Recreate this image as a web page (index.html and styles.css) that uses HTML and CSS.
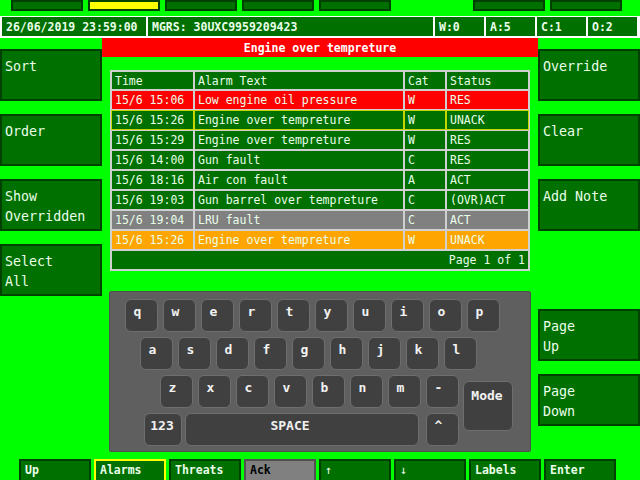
FILE: index.html
```html
<!DOCTYPE html>
<html>
<head>
<meta charset="utf-8">
<link rel="stylesheet" href="styles.css">
</head>
<body>
<div class="topnav">
  <span class="tb"></span>
  <span class="tb tb-active"></span>
  <span class="tb"></span>
  <span class="tb"></span>
  <span class="tb"></span>
  <span class="tb tb-hidden"></span>
  <span class="tb"></span>
  <span class="tb"></span>
</div>
<div class="status">
  <div class="cell cell-date">26/06/2019 23:59:00</div>
  <div class="cell cell-mgrs">MGRS: 30UXC9959209423</div>
  <div class="cell cell-count">W:0</div>
  <div class="cell cell-count">A:5</div>
  <div class="cell cell-count">C:1</div>
  <div class="cell cell-count">O:2</div>
</div>
<div class="main">
  <div class="side">
    <div class="sbtn">Sort</div>
    <div class="sbtn">Order</div>
    <div class="sbtn">Show<br>Overridden</div>
    <div class="sbtn">Select<br>All</div>
  </div>
  <div class="center">
    <div class="title">Engine over tempreture</div>
    <table class="alarms">
      <thead>
        <tr class="head">
          <th class="c-time">Time</th>
          <th class="c-text">Alarm Text</th>
          <th class="c-cat">Cat</th>
          <th class="c-status">Status</th>
        </tr>
      </thead>
      <tbody>
        <tr class="r-red"><td>15/6 15:06</td><td>Low engine oil pressure</td><td>W</td><td>RES</td></tr>
        <tr class="r-sel"><td>15/6 15:26</td><td>Engine over tempreture</td><td>W</td><td>UNACK</td></tr>
        <tr><td>15/6 15:29</td><td>Engine over tempreture</td><td>W</td><td>RES</td></tr>
        <tr><td>15/6 14:00</td><td>Gun fault</td><td>C</td><td>RES</td></tr>
        <tr><td>15/6 18:16</td><td>Air con fault</td><td>A</td><td>ACT</td></tr>
        <tr><td>15/6 19:03</td><td>Gun barrel over tempreture</td><td>C</td><td>(OVR)ACT</td></tr>
        <tr class="r-gray"><td>15/6 19:04</td><td>LRU fault</td><td>C</td><td>ACT</td></tr>
        <tr class="r-orange"><td>15/6 15:26</td><td>Engine over tempreture</td><td>W</td><td>UNACK</td></tr>
        <tr class="r-foot"><td colspan="4">Page 1 of 1</td></tr>
      </tbody>
    </table>
    <div class="keyboard">
      <div class="krow">
        <div class="key">q</div><div class="key">w</div><div class="key">e</div><div class="key">r</div><div class="key">t</div><div class="key">y</div><div class="key">u</div><div class="key">i</div><div class="key">o</div><div class="key">p</div>
      </div>
      <div class="krow krow-2">
        <div class="key">a</div><div class="key">s</div><div class="key">d</div><div class="key">f</div><div class="key">g</div><div class="key">h</div><div class="key">j</div><div class="key">k</div><div class="key">l</div>
      </div>
      <div class="kbottom">
        <div class="kcol">
          <div class="krow krow-3">
            <div class="key">z</div><div class="key">x</div><div class="key">c</div><div class="key">v</div><div class="key">b</div><div class="key">n</div><div class="key">m</div><div class="key">-</div>
          </div>
          <div class="krow krow-4">
            <div class="key key-num">123</div><div class="key key-space">SPACE</div><div class="key">^</div>
          </div>
        </div>
        <div class="key key-mode">Mode</div>
      </div>
    </div>
  </div>
  <div class="side">
    <div class="sbtn">Override</div>
    <div class="sbtn">Clear</div>
    <div class="sbtn">Add Note</div>
    <div class="sbtn sbtn-hidden"></div>
    <div class="sbtn">Page<br>Up</div>
    <div class="sbtn">Page<br>Down</div>
  </div>
</div>
<div class="bottombar">
  <div class="bb">Up</div>
  <div class="bb bb-active">Alarms</div>
  <div class="bb">Threats</div>
  <div class="bb bb-gray">Ack</div>
  <div class="bb bb-arrow">↑</div>
  <div class="bb bb-arrow">↓</div>
  <div class="bb">Labels</div>
  <div class="bb">Enter</div>
</div>
</body>
</html>
```

FILE: styles.css
```css
* { box-sizing: border-box; }

html, body {
  margin: 0;
  padding: 0;
}

body {
  width: 640px;
  height: 480px;
  overflow: hidden;
  background: #00ff00;
  font-family: "DejaVu Sans Mono", "Liberation Mono", monospace;
  color: #eaffea;
}

/* top navigation tabs */
.topnav {
  display: flex;
  gap: 5px;
  padding-left: 11px;
  height: 11px;
}
.tb {
  width: 72px;
  height: 11px;
  background: #007000;
  border: 2px solid #004000;
}
.tb-active { background: #ffff00; }
.tb-hidden { visibility: hidden; }

/* status bar */
.status {
  margin-top: 5px;
  height: 22px;
  display: flex;
  gap: 2px;
  background: #ffffff;
  padding: 1px 3px 2px 2px;
}
.cell {
  background: #007000;
  font-weight: bold;
  font-size: 11.5px;
  display: flex;
  align-items: center;
  padding-left: 4px;
  white-space: nowrap;
}
.cell-date { width: 144px; }
.cell-mgrs { width: 285px; }
.cell-count { width: 49px; }

/* main area */
.main {
  display: flex;
  height: 421px;
}
.side {
  width: 102px;
  padding-top: 11px;
  display: flex;
  flex-direction: column;
  gap: 13px;
}
.sbtn {
  height: 52px;
  background: #007000;
  border: 2px solid #004000;
  font-size: 13.33px;
  line-height: 20px;
  padding: 6px 3px 0 3px;
}
.sbtn-hidden { visibility: hidden; }

.center {
  width: 436px;
  display: flex;
  flex-direction: column;
}
.title {
  height: 19px;
  background: #ff0000;
  color: #ffffff;
  font-weight: bold;
  font-size: 11.5px;
  text-align: center;
  line-height: 20px;
}

/* alarm table */
.alarms {
  margin: 13px 8px 0 8px;
  width: 420px;
  table-layout: fixed;
  border-collapse: separate;
  border-spacing: 0;
  border: 1px solid #d0d0d0;
  font-size: 11.5px;
}
.alarms th,
.alarms td {
  border: 1px solid #d0d0d0;
  background: #007000;
  padding: 0 0 0 3px;
  height: 20px;
  text-align: left;
  font-weight: normal;
  white-space: nowrap;
  overflow: hidden;
}
.alarms th { height: 19px; }
.c-time { width: 83px; }
.c-text { width: 210px; }
.c-cat { width: 42px; }
.c-status { width: 83px; }

.alarms .r-red td { background: #ff0000; }
.alarms .r-gray td { background: #808080; }
.alarms .r-orange td { background: #ffa500; }
.alarms .r-sel td { border-color: #c8d400; }
.alarms .r-foot td {
  text-align: right;
  padding-right: 3px;
}

/* keyboard */
.keyboard {
  margin: 20px 0 0 7px;
  width: 422px;
  height: 161px;
  background: #5f5f5f;
  border: 1px solid #505050;
  border-radius: 2px;
  padding: 7px 0 0 15px;
}
.krow {
  display: flex;
  gap: 5px;
  height: 33px;
  margin-bottom: 5px;
}
.krow-2 { margin-left: 15px; }
.kbottom {
  display: flex;
  gap: 4px;
}
.kcol {
  margin-left: 19px;
  display: flex;
  flex-direction: column;
}
.krow-3 { margin-left: 16px; }
.krow-4 { gap: 0; margin-bottom: 0; }
.key {
  width: 33px;
  height: 33px;
  background: #404040;
  border: 1px solid #6e6e6e;
  border-radius: 6px;
  color: #f2f2f2;
  font-weight: bold;
  font-size: 13px;
  line-height: 16px;
  text-align: center;
  padding: 4px 8px 0 0;
}
.key-num {
  width: 38px;
  margin-right: 3px;
  padding-right: 2px;
}
.key-space {
  width: 234px;
  margin-right: 7px;
  padding-right: 24px;
}
.key-mode {
  width: 50px;
  height: 50px;
  margin-top: 6px;
  padding: 6px 2px 0 0;
}

/* bottom bar */
.bottombar {
  display: flex;
  gap: 3px;
  padding-left: 19px;
}
.bb {
  width: 72px;
  height: 24px;
  background: #007000;
  border: 2px solid #004000;
  font-weight: bold;
  font-size: 11.5px;
  line-height: 19px;
  padding: 0 4px;
}
.bb-active { border-color: #ffff00; }
.bb-gray {
  background: #808080;
  border-color: #505050;
  color: #000000;
}
.bb-arrow { font-weight: normal; }
```
